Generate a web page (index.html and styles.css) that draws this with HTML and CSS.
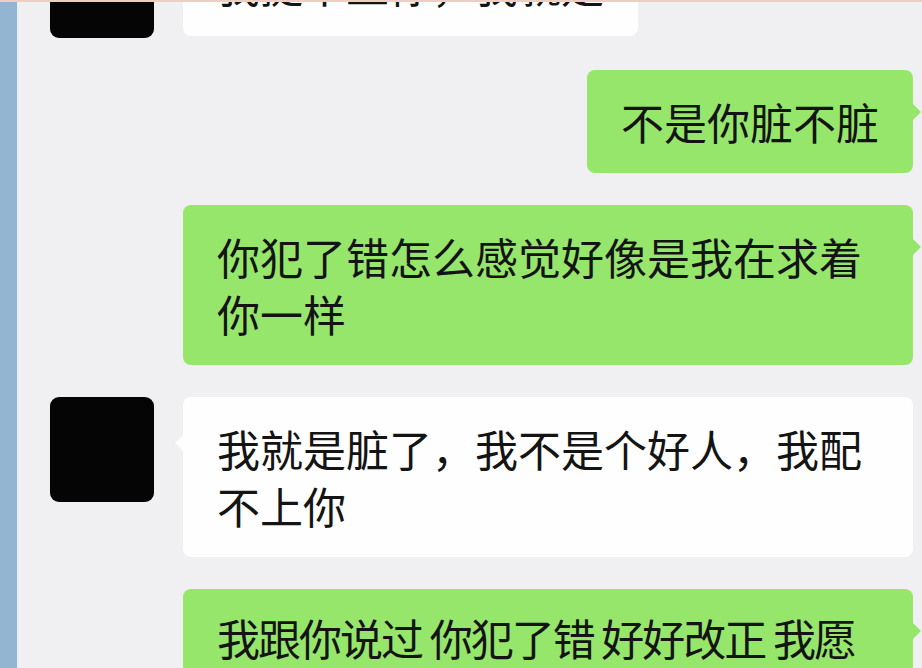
FILE: index.html
```html
<!DOCTYPE html>
<html lang="zh-CN">
<head>
    <meta charset="UTF-8">
    <meta name="viewport" content="width=device-width, initial-scale=1.0">
    <title>聊天记录</title>
    <link rel="stylesheet" href="styles.css">
</head>
<body>
    <div class="topline"></div>
    <div class="screen">
        <div class="edge"></div>
        <div class="chat">
            <div class="row left">
                <div class="avatar"></div>
                <div class="bubble white">我挺不上你，我就是</div>
            </div>

            <div class="row right">
                <div class="bubble green">不是你脏不脏</div>
            </div>

            <div class="row right">
                <div class="bubble green">你犯了错怎么感觉好像是我在求着你一样</div>
            </div>

            <div class="row left">
                <div class="avatar"></div>
                <div class="bubble white">我就是脏了，我不是个好人，我配不上你</div>
            </div>

            <div class="row right">
                <div class="bubble green tight">我跟你说过 你犯了错 好好改正 我愿意原谅你</div>
            </div>
        </div>
    </div>
</body>
</html>
```

FILE: styles.css
```css
body {
    margin: 0;
    padding: 0;
    background-color: #f0eff1;
    font-family: "Noto Sans CJK SC", "Noto Sans", sans-serif;
    overflow: hidden;
    height: 668px;
}
.topline {
    position: absolute;
    top: 0;
    left: 0;
    right: 0;
    height: 2px;
    background-color: #f2cbc3;
    z-index: 2;
}
.screen {
    display: flex;
    height: 100%;
}
.edge {
    width: 17px;
    flex-shrink: 0;
    background-color: #94b5d1;
    border-right: 2px solid #e6f1f9;
}
.chat {
    flex: 1;
    display: flex;
    flex-direction: column;
    gap: 32px;
    margin-top: -67px;
    padding: 0 9px 0 31px;
}
.row {
    display: flex;
    align-items: flex-start;
}
.row.left {
    gap: 29px;
}
.row.right {
    justify-content: flex-end;
}
.avatar {
    width: 104px;
    height: 105px;
    flex-shrink: 0;
    background-color: #050505;
    border-radius: 9px;
}
.bubble {
    position: relative;
    max-width: 662px;
    padding: 23px 34px;
    border-radius: 8px;
    font-size: 43px;
    line-height: 57px;
    color: #141414;
}
.bubble.green {
    background-color: #97e66c;
}
.bubble.white {
    background-color: #fefefe;
}
.bubble.tight {
    letter-spacing: -2px;
    padding-top: 20px;
}
.bubble.green::after {
    content: "";
    position: absolute;
    right: -8px;
    top: 34px;
    border-left: 8px solid #97e66c;
    border-top: 8px solid transparent;
    border-bottom: 8px solid transparent;
}
.bubble.white::after {
    content: "";
    position: absolute;
    left: -8px;
    top: 38px;
    border-right: 8px solid #fefefe;
    border-top: 8px solid transparent;
    border-bottom: 8px solid transparent;
}
```
